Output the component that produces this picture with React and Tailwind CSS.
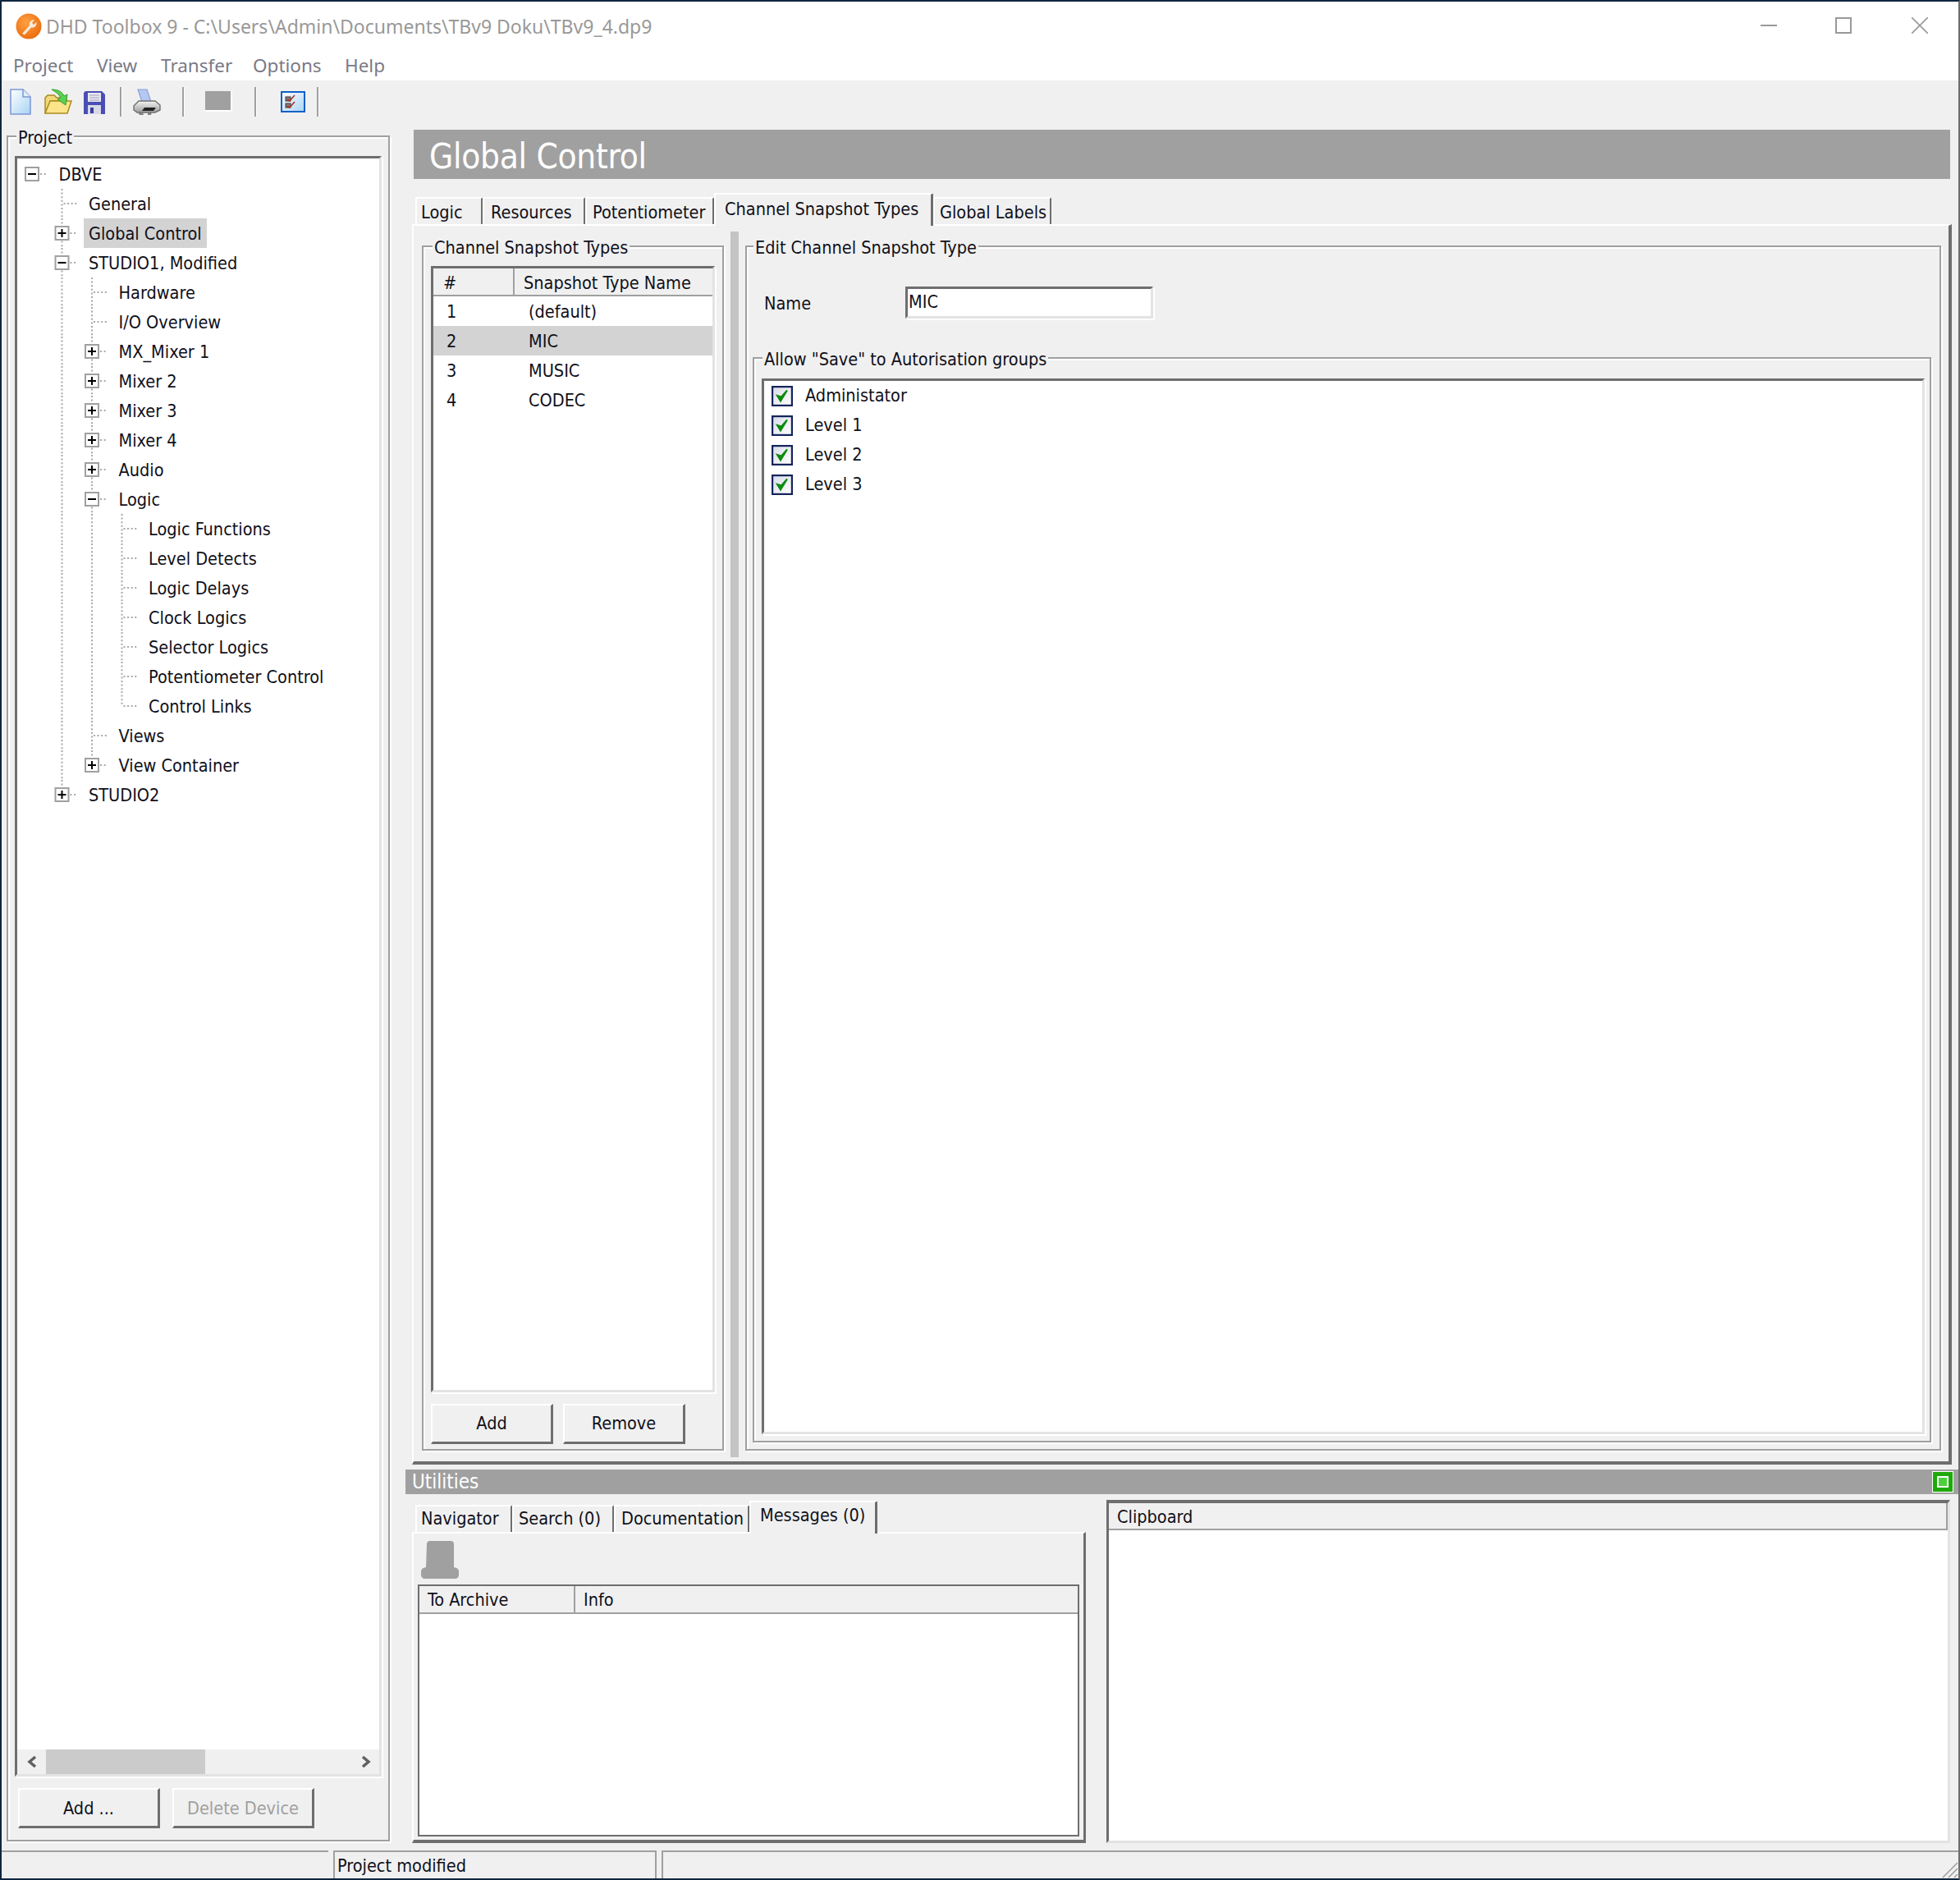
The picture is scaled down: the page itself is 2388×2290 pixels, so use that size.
const ui = "font-['DejaVu_Sans_Condensed','Noto_Sans',sans-serif] text-[21.5px] text-[#10101a]";

const bevelGroup = "relative border-2 border-[#a0a0a0] shadow-[inset_2px_2px_0_#fff,2px_2px_0_#fff]";
const sunken = "border-[3px] border-t-[#6e6e6e] border-l-[#6e6e6e] border-r-[#e3e3e3] border-b-[#e3e3e3] shadow-[2px_2px_0_#fff] bg-white";

const treeRows = [
  { label: 'DBVE', level: 0, exp: '-', lines: [] },
  { label: 'General', level: 1, lines: [] },
  { label: 'Global Control', level: 1, exp: '+', lines: [], selected: true },
  { label: 'STUDIO1, Modified', level: 1, exp: '-', lines: [] },
  { label: 'Hardware', level: 2, lines: [1] },
  { label: 'I/O Overview', level: 2, lines: [1] },
  { label: 'MX_Mixer 1', level: 2, exp: '+', lines: [1] },
  { label: 'Mixer 2', level: 2, exp: '+', lines: [1] },
  { label: 'Mixer 3', level: 2, exp: '+', lines: [1] },
  { label: 'Mixer 4', level: 2, exp: '+', lines: [1] },
  { label: 'Audio', level: 2, exp: '+', lines: [1] },
  { label: 'Logic', level: 2, exp: '-', lines: [1] },
  { label: 'Logic Functions', level: 3, lines: [1, 2] },
  { label: 'Level Detects', level: 3, lines: [1, 2] },
  { label: 'Logic Delays', level: 3, lines: [1, 2] },
  { label: 'Clock Logics', level: 3, lines: [1, 2] },
  { label: 'Selector Logics', level: 3, lines: [1, 2] },
  { label: 'Potentiometer Control', level: 3, lines: [1, 2] },
  { label: 'Control Links', level: 3, lines: [1, 2], last: true },
  { label: 'Views', level: 2, lines: [1] },
  { label: 'View Container', level: 2, exp: '+', lines: [1], last: true },
  { label: 'STUDIO2', level: 1, exp: '+', lines: [], last: true },
];

const TreeGuide = ({ level, exp, lines, last }) => {
  const cx = level * 36.5 + 18;
  return (
    <svg width={(level + 1) * 36.5 + 1} height="36" className="shrink-0">
      <g stroke="#a8a8a8" strokeWidth="2" strokeDasharray="2 2.6" fill="none">
        {lines.map((l) => (
          <line key={l} x1={l * 36.5 + 18} x2={l * 36.5 + 18} y1="0" y2="36" />
        ))}
        {level > 0 && <line x1={cx} x2={cx} y1="0" y2={last ? 18 : 36} />}
        <line x1={cx + (exp ? 10 : 2)} x2={cx + 19} y1="18" y2="18" />
      </g>
      {exp && (
        <g>
          <rect x={cx - 8} y="10" width="16" height="16" fill="#fff" stroke="#a0a0a0" strokeWidth="2" />
          <line x1={cx - 5} x2={cx + 5} y1="18" y2="18" stroke="#000" strokeWidth="2" />
          {exp === '+' && <line x1={cx} x2={cx} y1="13" y2="23" stroke="#000" strokeWidth="2" />}
        </g>
      )}
    </svg>
  );
};

const Button = ({ children, className, disabled }) => (
  <button
    type="button"
    className={`h-[49px] border-2 border-t-white border-l-white border-r-[3px] border-b-[3px] border-r-[#6e6e6e] border-b-[#6e6e6e] bg-[#f0f0f0] ${disabled ? 'text-[#a0a0a0]' : ''} ${className}`}
  >
    {children}
  </button>
);

const Legend = ({ children, className }) => (
  <div className={`absolute -top-[13px] bg-[#f0f0f0] leading-[28px] ${className}`}>{children}</div>
);

const Tab = ({ children, className, active }) =>
  active ? (
    <div className={`relative z-10 -mb-[2px] flex h-[40px] items-start rounded-t-[2px] border-l-2 border-t-2 border-r-[3px] border-l-white border-t-white border-r-[#6e6e6e] bg-[#f0f0f0] ${className}`}>
      {children}
    </div>
  ) : (
    <div className={`flex h-[33px] items-center rounded-t-[2px] border-l-2 border-t-2 border-r-2 border-l-white border-t-white border-r-[#6e6e6e] bg-[#f0f0f0] ${className}`}>
      {children}
    </div>
  );

const Logo = () => (
  <svg width="32" height="32" viewBox="0 0 32 32" className="shrink-0">
    <defs>
      <radialGradient id="lg" cx="0.4" cy="0.35" r="0.75">
        <stop offset="0" stopColor="#ffa040" />
        <stop offset="1" stopColor="#e8680c" />
      </radialGradient>
    </defs>
    <circle cx="16" cy="16" r="15.5" fill="url(#lg)" />
    <path d="M8 25l9-10c-1-3 1-7 6-7l-3 4 2 2 3.5-3c.5 5-3.5 7.5-6.5 6.5l-8 9z" fill="#f7e8d8" />
  </svg>
);

const NewIcon = () => (
  <svg width="26" height="32" viewBox="0 0 26 32">
    <defs>
      <linearGradient id="ng" x1="0" y1="0" x2="1" y2="1">
        <stop offset="0" stopColor="#ffffff" />
        <stop offset="1" stopColor="#a8d4f4" />
      </linearGradient>
    </defs>
    <path d="M1 1h15l9 9v21H1z" fill="url(#ng)" stroke="#7c96d8" strokeWidth="1.5" />
    <path d="M16 1v9h9" fill="#dfeefa" stroke="#7c96d8" strokeWidth="1.5" />
  </svg>
);

const OpenIcon = () => (
  <svg width="34" height="32" viewBox="0 0 34 32">
    <path d="M1 30V11l3-3h8l3 3h12v4H8L1 30z" fill="#f2d878" stroke="#a88a20" strokeWidth="1.5" />
    <path d="M1 30l6-15h26l-5 15z" fill="#fce48a" stroke="#a88a20" strokeWidth="1.5" />
    <path d="M9 1c8 0 13 3 15 8l4-2-2 13-10-7 4-2C18 7 14 4 9 1z" fill="#5cd050" stroke="#30a030" strokeWidth="1" />
  </svg>
);

const SaveIcon = () => (
  <svg width="26" height="28" viewBox="0 0 26 28">
    <path d="M0 2l2-2h20l4 4v24H0z" fill="#4a4eb4" />
    <rect x="5" y="2" width="16" height="11" fill="#e8e8f0" />
    <path d="M7 5h12M7 8h12M7 11h12" stroke="#a0a0c0" strokeWidth="1" />
    <rect x="5" y="17" width="16" height="11" fill="#d8d8e8" />
    <rect x="8" y="20" width="4" height="7" fill="#3a3ea0" />
  </svg>
);

const PrintIcon = () => (
  <svg width="34" height="32" viewBox="0 0 34 32">
    <defs>
      <linearGradient id="pb" x1="0" y1="0" x2="0" y2="1">
        <stop offset="0" stopColor="#f4f4f4" />
        <stop offset="1" stopColor="#9c9c9c" />
      </linearGradient>
    </defs>
    <path d="M6 1h11l5 15H11z" fill="#b4c8f4" stroke="#8ca0d4" strokeWidth="1.2" />
    <path d="M1 21l6-6h20l6 5v6l-6 3H5l-4-3z" fill="url(#pb)" stroke="#707070" strokeWidth="1.4" />
    <path d="M14 23h14l-3 4H11z" fill="#202020" />
    <path d="M6 29h6l1 3H8zM18 29h5l-1 3h-4z" fill="#808080" />
  </svg>
);

const ChecksIcon = () => (
  <svg width="30" height="26" viewBox="0 0 30 26">
    <defs>
      <linearGradient id="cg" x1="0" y1="0" x2="1" y2="1">
        <stop offset="0" stopColor="#ffffff" />
        <stop offset="1" stopColor="#a8d4f4" />
      </linearGradient>
    </defs>
    <rect x="1" y="1" width="28" height="24" fill="url(#cg)" stroke="#1060c8" strokeWidth="2" />
    <rect x="6" y="7" width="6" height="5" fill="#808080" stroke="#403030" />
    <rect x="6" y="15" width="6" height="5" fill="#808080" stroke="#403030" />
    <path d="M8 10l3 2 6-7M8 18l3 2 6-7" stroke="#b03020" strokeWidth="1.6" fill="none" />
  </svg>
);

const ToolSep = ({ className }) => <div className={`h-[36px] w-[3px] border-l-2 border-r border-l-[#a0a0a0] border-r-white ${className}`} />;

const Check = () => (
  <svg width="26" height="25" viewBox="0 0 26 25" className="shrink-0">
    <defs>
      <linearGradient id="cb" x1="0" y1="0" x2="1" y2="1">
        <stop offset="0" stopColor="#d8dce8" />
        <stop offset="1" stopColor="#ffffff" />
      </linearGradient>
    </defs>
    <rect x="1" y="1" width="24" height="23" fill="url(#cb)" stroke="#14245a" strokeWidth="2.4" />
    <path d="M7 12l4 6.5 8-13-7 8z" fill="#0e8a0e" stroke="#0e8a0e" strokeWidth="2" />
  </svg>
);

const Chevron = ({ right }) => (
  <svg width="14" height="16" viewBox="0 0 14 16">
    <path d={right ? 'M3 2l7 6-7 6' : 'M11 2L4 8l7 6'} stroke="#606060" strokeWidth="3.5" fill="none" />
  </svg>
);

const ListHead = ({ first, second, firstClass, secondClass }) => (
  <div className="flex h-[34px] shrink-0 border-b-2 border-[#a0a0a0] bg-[#f0f0f0]">
    <div className={`flex items-center border-r-2 border-[#a0a0a0] ${firstClass}`}>{first}</div>
    <div className={`flex flex-1 items-center ${secondClass}`}>{second}</div>
  </div>
);

export default function App() {
  return (
    <div className={`flex h-[2290px] w-[2388px] flex-col border-2 border-r-[#6e6e6e] border-t-[#10263f] border-l-[#10263f] border-b-[#10263f] bg-[#f0f0f0] ${ui}`}>
      {/* title + menu */}
      <div className="h-[96px] shrink-0 bg-white">
        <div className="flex h-[60px] items-center pl-[17px] font-['Noto_Sans',sans-serif] text-[23px] text-[#999]">
          <Logo />
          <span className="ml-[5px] whitespace-nowrap">DHD Toolbox 9 - C:\Users\Admin\Documents\TBv9 Doku\TBv9_4.dp9</span>
          <div className="mb-[2px] ml-auto flex items-center">
            <svg width="20" height="2" className="mr-[71px]"><rect width="20" height="2" fill="#999" /></svg>
            <div className="mr-[73px] h-[20px] w-[20px] border-2 border-[#999]" />
            <svg width="20" height="20" className="mr-[37px]"><path d="M0 0l20 20M20 0L0 20" stroke="#999" strokeWidth="1.6" /></svg>
          </div>
        </div>
        <div className="flex h-[36px] items-center pl-[14px] font-['Noto_Sans',sans-serif] text-[22.5px] text-[#7a7a86]">
          <span className="w-[102px]">Project</span>
          <span className="w-[78px]">View</span>
          <span className="w-[112px]">Transfer</span>
          <span className="w-[112px]">Options</span>
          <span>Help</span>
        </div>
      </div>

      {/* toolbar */}
      <div className="flex h-[60px] shrink-0 items-start pl-[10px] pt-[10px]">
        <NewIcon />
        <div className="ml-[16px]"><OpenIcon /></div>
        <div className="ml-[14px] mt-[3px]"><SaveIcon /></div>
        <ToolSep className="ml-[18px] mt-[-2px]" />
        <div className="ml-[13px]"><PrintIcon /></div>
        <ToolSep className="ml-[26px] mt-[-2px]" />
        <div className="ml-[25px] mt-[3px] h-[25px] w-[33px] border-b-2 border-r-2 border-white bg-[#a0a0a0]" />
        <ToolSep className="ml-[27px] mt-[-2px]" />
        <div className="ml-[29px] mt-[3px]"><ChecksIcon /></div>
        <ToolSep className="ml-[14px] mt-[-2px]" />
      </div>

      {/* body */}
      <div className="flex min-h-0 flex-1">
        {/* project side */}
        <div className="w-[492px] shrink-0 pl-[6px] pt-[7px]">
          <div className={`flex h-[2078px] w-[467px] flex-col px-[8px] pb-[14px] pt-[23px] ${bevelGroup}`}>
            <Legend className="left-[10px] px-[2px]">Project</Legend>
            <div className={`flex min-h-0 flex-1 flex-col ${sunken}`}>
              <div className="min-h-0 flex-1 pt-[1px]">
                {treeRows.map((r) => (
                  <div key={r.label} className="flex h-[36px] items-center">
                    <TreeGuide level={r.level} exp={r.exp} lines={r.lines} last={r.last} />
                    <span className={`ml-[7px] flex h-[36px] items-center whitespace-nowrap px-[6px] pt-[3px] ${r.selected ? 'bg-[#d3d3d3]' : ''}`}>{r.label}</span>
                  </div>
                ))}
              </div>
              <div className="flex h-[30px] shrink-0 items-center bg-[#f0f0f0]">
                <div className="flex w-[35px] justify-center"><Chevron /></div>
                <div className="h-full w-[194px] bg-[#cbcbcb]" />
                <div className="ml-auto mr-[9px] flex"><Chevron right /></div>
              </div>
            </div>
            <div className="ml-[4px] mt-[14px] flex shrink-0 gap-[15px]">
              <Button className="w-[173px] pt-[2px]">Add ...</Button>
              <Button className="w-[173px] pt-[2px]" disabled>Delete Device</Button>
            </div>
          </div>
        </div>

        {/* main side */}
        <div className="flex min-w-0 flex-1 flex-col">
          <div className="mx-[10px] flex h-[60px] shrink-0 items-center bg-[#a0a0a0] pl-[19px] pt-[4px] text-[42px] tracking-[-0.3px] text-white">
            Global Control
          </div>

          <div className="ml-[12px] mt-[17px] flex h-[38px] shrink-0 items-end">
            <Tab className="w-[82px] pl-[5px] pt-[3px]">Logic</Tab>
            <Tab className="w-[125px] pl-[8px] pt-[3px]">Resources</Tab>
            <Tab className="w-[157px] pl-[7px] pt-[3px]">Potentiometer</Tab>
            <Tab active className="w-[267px] pl-[11px] pt-[2px]">Channel Snapshot Types</Tab>
            <Tab className="w-[144px] pl-[6px] pt-[3px]">Global Labels</Tab>
          </div>

          <div className="mx-[8px] flex h-[1511px] shrink-0 items-start border-[2px] border-b-[4px] border-r-[4px] border-t-white border-l-white border-r-[#6e6e6e] border-b-[#6e6e6e] pl-[10px] pt-[7px]">
            {/* list of snapshot types */}
            <div className={`mt-[17px] flex h-[1468px] w-[368px] shrink-0 flex-col px-[9px] pb-[6px] pt-[23px] ${bevelGroup}`}>
              <Legend className="left-[11px] px-[2px]">Channel Snapshot Types</Legend>
              <div className={`flex h-[1372px] shrink-0 flex-col ${sunken}`}>
                <ListHead first="#" second="Snapshot Type Name" firstClass="w-[99px] pl-[12px] pt-[5px]" secondClass="pl-[11px] pt-[5px]" />
                {['(default)', 'MIC', 'MUSIC', 'CODEC'].map((n, i) => (
                  <div key={n} className={`flex h-[36px] items-center pt-[3px] ${n === 'MIC' ? 'bg-[#d3d3d3]' : ''}`}>
                    <span className="w-[116px] pl-[16px]">{i + 1}</span>
                    <span>{n}</span>
                  </div>
                ))}
              </div>
              <div className="mt-[14px] flex gap-[12px]">
                <Button className="w-[149px]">Add</Button>
                <Button className="w-[149px]">Remove</Button>
              </div>
            </div>

            <div className="ml-[8px] h-[1493px] w-[10px] shrink-0 bg-[#c4c4c4]" />

            {/* edit snapshot type */}
            <div className={`ml-[8px] mt-[17px] flex h-[1468px] w-[1457px] shrink-0 flex-col pb-[8px] pl-[7px] pr-[10px] pt-[48px] ${bevelGroup}`}>
              <Legend className="left-[8px] px-[2px]">Edit Channel Snapshot Type</Legend>
              <div className="ml-[14px] flex h-[39px] shrink-0 items-center">
                <span className="w-[172px] pt-[3px]">Name</span>
                <div className={`flex h-[39px] w-[302px] items-center pl-[1px] ${sunken}`}>MIC</div>
              </div>
              <div className={`mt-[47px] flex min-h-0 flex-1 flex-col pb-[8px] pl-[9px] pr-[6px] pt-[24px] ${bevelGroup}`}>
                <Legend className="left-[10px] px-[2px]">Allow "Save" to Autorisation groups</Legend>
                <div className={`min-h-0 flex-1 pl-[9px] ${sunken}`}>
                  {['Administator', 'Level 1', 'Level 2', 'Level 3'].map((n) => (
                    <div key={n} className="flex h-[36px] items-center gap-[15px]">
                      <Check />
                      <span>{n}</span>
                    </div>
                  ))}
                </div>
              </div>
            </div>
          </div>

          {/* utilities */}
          <div className="mt-[6px] flex h-[30px] shrink-0 items-center justify-between bg-[#a0a0a0] pl-[8px] pr-[7px] text-[24px] text-white">
            <span>Utilities</span>
            <div className="flex h-[24px] w-[24px] items-center justify-center border-[5px] border-[#1ea90a] shadow-[0_0_0_1px_#fff]">
              <div className="flex h-full w-full items-center justify-center bg-white">
                <div className="h-[10px] w-[10px] bg-[#4cd13b]" />
              </div>
            </div>
          </div>

          <div className="flex min-h-0 flex-1 pl-[8px] pt-[7px]">
            <div className="flex h-[418px] w-[821px] shrink-0 flex-col">
              <div className="ml-[4px] flex h-[39px] shrink-0 items-end">
                <Tab className="w-[118px] pl-[5px]">Navigator</Tab>
                <Tab className="w-[124px] pl-[6px]">Search (0)</Tab>
                <Tab className="w-[165px] pl-[7px]">Documentation</Tab>
                <Tab active className="w-[156px] pl-[11px]">Messages (0)</Tab>
              </div>
              <div className="flex min-h-0 flex-1 flex-col border-2 border-b-[4px] border-r-[3px] border-t-white border-l-white border-r-[#6e6e6e] border-b-[#6e6e6e] pl-[5px] pr-[5px] pb-[4px] pt-[9px]">
                <svg width="46" height="46" viewBox="0 0 46 46" className="ml-[4px] shrink-0">
                  <path d="M7 4q0-4 4-4h25q4 0 4 4v28q6 1 6 5v4q0 5-5 5H5q-5 0-5-5v-4q0-4 6-5z" fill="#a0a0a0" />
                </svg>
                <div className="mt-[7px] flex min-h-0 flex-1 flex-col border-2 border-[#6e6e6e] bg-white">
                  <ListHead first="To Archive" second="Info" firstClass="w-[190px] pl-[10px] pt-[3px]" secondClass="pl-[10px] pt-[3px]" />
                </div>
              </div>
            </div>
            <div className="ml-[25px] flex h-[418px] w-[1028px] shrink-0 flex-col border-[3px] border-t-[4px] border-t-[#6e6e6e] border-l-[#6e6e6e] border-r-[#e3e3e3] border-b-[#e3e3e3] bg-white">
              <div className="flex h-[33px] shrink-0 items-center border-b-2 border-r-2 border-[#a0a0a0] bg-[#f0f0f0] pl-[10px] pt-[3px]">Clipboard</div>
            </div>
          </div>
        </div>
      </div>

      {/* status bar */}
      <div className="flex h-[34px] shrink-0 gap-[6px]">
        <div className="w-[398px] border-t-2 border-[#a0a0a0]" />
        <div className="flex w-[394px] items-center border-l-2 border-r-2 border-t-2 border-[#a0a0a0] pl-[3px] pt-[2px]">Project modified</div>
        <div className="relative flex-1 border-l-2 border-t-2 border-[#a0a0a0]">
          <svg width="22" height="22" className="absolute bottom-0 right-0">
            <path d="M21 3L3 21M21 10L10 21M21 17l-4 4" stroke="#a0a0a0" strokeWidth="1.6" />
          </svg>
        </div>
      </div>
    </div>
  );
}
